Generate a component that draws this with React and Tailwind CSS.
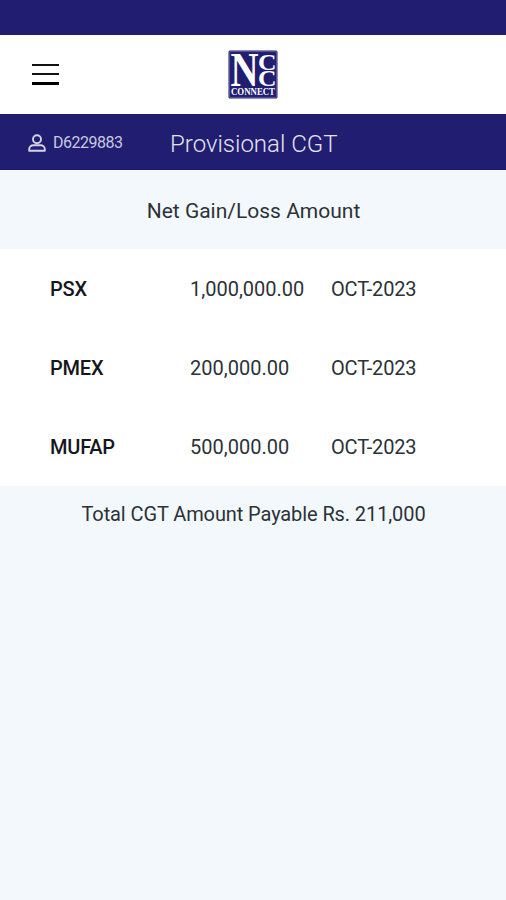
const rows = [
  { market: "PSX", amount: "1,000,000.00", month: "OCT-2023" },
  { market: "PMEX", amount: "200,000.00", month: "OCT-2023" },
  { market: "MUFAP", amount: "500,000.00", month: "OCT-2023" },
]

function Logo() {
  return (
    <svg width="50" height="49" viewBox="0 0 50 49" role="img" aria-label="NCC Connect">
      <rect x="0.5" y="0.5" width="49" height="48" rx="1.5" fill="#211d70" />
      <rect x="1.8" y="1.8" width="46.4" height="45.4" fill="none" stroke="#8d8bbd" strokeWidth="0.5" />
      <g fill="#fff" fontFamily="'Liberation Serif', serif" fontWeight="700">
        <text x="2.5" y="35.5" fontSize="49" textLength="28" lengthAdjust="spacingAndGlyphs">N</text>
        <text x="30" y="19.5" fontSize="23.5" textLength="18.5" lengthAdjust="spacingAndGlyphs">C</text>
        <text x="30" y="35.5" fontSize="23.5" textLength="18.5" lengthAdjust="spacingAndGlyphs">C</text>
        <text x="3" y="45" fontSize="9.5" textLength="44" lengthAdjust="spacingAndGlyphs">CONNECT</text>
      </g>
    </svg>
  )
}

function UserIcon() {
  return (
    <svg width="18" height="18" viewBox="0 0 18 18" fill="none" stroke="#d3d2e6" strokeWidth="1.9" strokeLinejoin="round">
      <circle cx="9" cy="5.2" r="4" />
      <path d="M1.2 16.8v-1.6c0-2.3 1.8-4 4.2-4h7.2c2.4 0 4.2 1.7 4.2 4v1.6z" />
    </svg>
  )
}

export default function App() {
  return (
    <div className="h-[900px] w-full overflow-hidden bg-[#f3f8fc] font-['Roboto',sans-serif] text-xl text-[#2b3238]">
      <div className="h-[35px] bg-[#211d70]" />

      <header className="grid h-[79px] grid-cols-3 items-center bg-white px-8">
        <button aria-label="Menu" className="flex w-[27px] flex-col gap-[7px] pb-px">
          <span className="h-[2px] bg-[#111]" />
          <span className="h-[2px] bg-[#111]" />
          <span className="h-[3px] bg-black" />
        </button>
        <div className="flex justify-center">
          <Logo />
        </div>
      </header>

      <div className="flex h-14 items-center bg-[#211d70] pt-[3px] pl-7 text-[#e4e3f2]">
        <div className="flex w-[142px] items-center gap-[7px] pb-[2px]">
          <UserIcon />
          <span className="pt-px text-base tracking-[-0.5px] text-[#c9c8e0]">D6229883</span>
        </div>
        <h1 className="text-2xl font-light">Provisional CGT</h1>
      </div>

      <h2 className="flex h-[79px] items-center justify-center pt-1 pl-px text-[21px]">Net Gain/Loss Amount</h2>

      <div className="bg-white">
        {rows.map(row => (
          <div key={row.market} className="grid h-[79px] grid-cols-[140px_141px_1fr] items-center pt-px pl-[50px]">
            <span className="font-medium tracking-[-0.2px] text-[#14181e]">{row.market}</span>
            <span>{row.amount}</span>
            <span className="tracking-[-0.15px]">{row.month}</span>
          </div>
        ))}
      </div>

      <p className="mt-[14px] pl-px text-center tracking-[-0.1px]">Total CGT Amount Payable Rs. 211,000</p>
    </div>
  )
}
